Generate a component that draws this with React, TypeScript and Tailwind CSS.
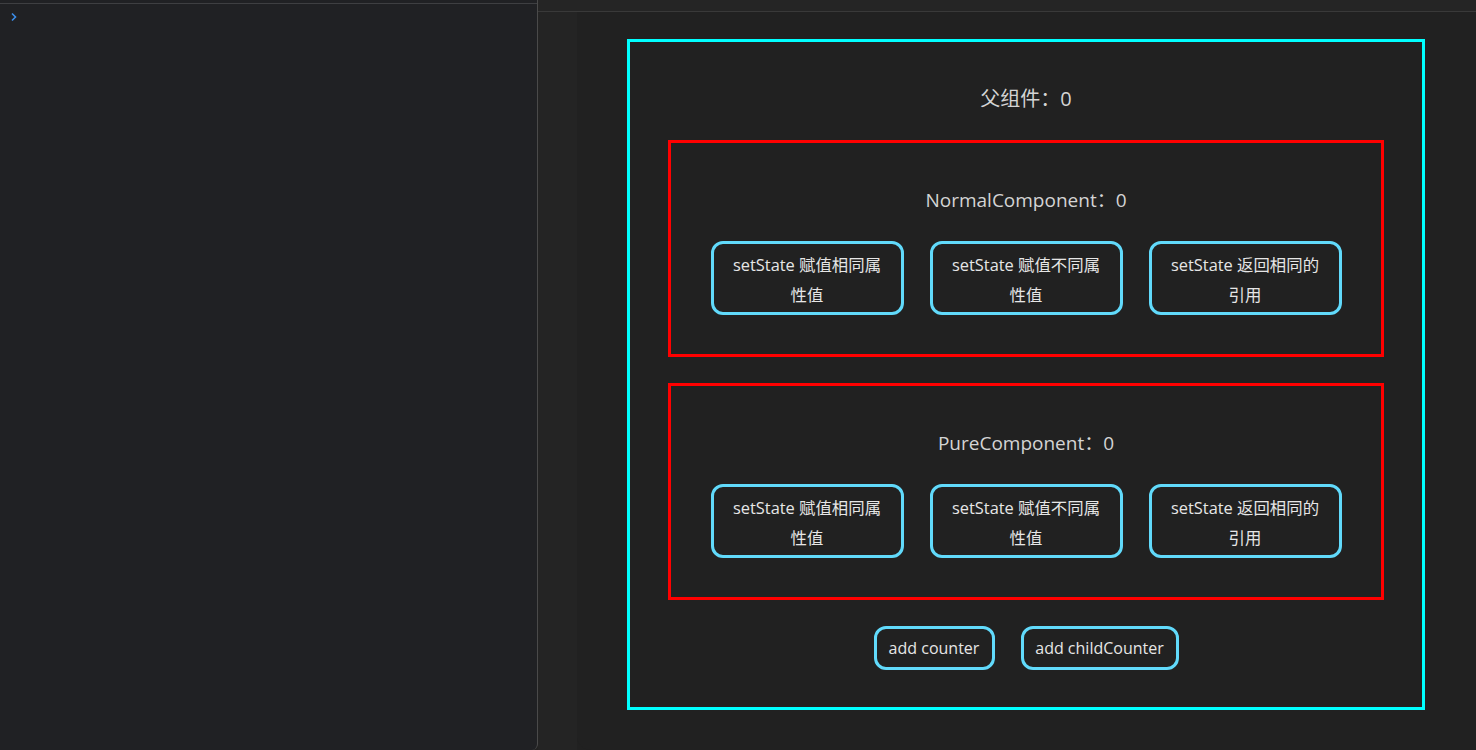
const font = { fontFamily: '"Open Sans", "Noto Sans CJK SC", sans-serif' };

function ActionButton({ children }: { children: React.ReactNode }) {
  return (
    <button className="w-[193px] h-[74px] px-[18px] pt-[4px] border-[3px] border-[#61dafb] rounded-[12px] text-[16.4px] leading-[30px] text-[#e6e6e6] bg-transparent">
      {children}
    </button>
  );
}

function ChildBox({ title }: { title: string }) {
  return (
    <div className="w-[716px] h-[217px] border-[3px] border-[#ff0000] flex flex-col items-center pt-[44px]">
      <div className="text-[19px] leading-[26px] text-[#d4d4d4]">{title}：0</div>
      <div className="flex gap-[26px] mt-[28px]">
        <ActionButton>setState 赋值相同属性值</ActionButton>
        <ActionButton>setState 赋值不同属性值</ActionButton>
        <ActionButton>setState 返回相同的引用</ActionButton>
      </div>
    </div>
  );
}

export default function App() {
  return (
    <div className="flex w-[1476px] h-[750px] bg-[#212121] overflow-hidden" style={font}>
      <aside className="w-[538px] h-full bg-[#202124] border-r border-[#4a4a4a] rounded-br-[6px]">
        <div className="mt-[3px] border-t border-[#3e3f42] pt-[8px] pl-[10px]">
          <svg width="8" height="10" viewBox="0 0 8 10" fill="none">
            <path d="M2 1.5 L5.5 5 L2 8.5" stroke="#3b8eea" strokeWidth="1.6" />
          </svg>
        </div>
      </aside>
      <div className="flex-1 flex flex-col">
        <div className="h-[12px] bg-[#252525] border-b border-[#393939]" />
        <div className="flex flex-1">
          <div className="w-[39px] bg-[#242424]" />
          <main className="flex-1 bg-[#212121] rounded-bl-[14px] pl-[50px] pt-[27px]">
            <div className="w-[798px] h-[671px] border-[3px] border-[#00ffff] flex flex-col items-center pt-[44px]">
              <div className="text-[20px] leading-[26px] text-[#d4d4d4]">父组件：0</div>
              <div className="mt-[28px] flex flex-col gap-[26px]">
                <ChildBox title="NormalComponent" />
                <ChildBox title="PureComponent" />
              </div>
              <div className="flex gap-[26px] mt-[26px]">
                <button className="h-[44px] w-[121px] border-[3px] border-[#61dafb] rounded-[12px] text-[16px] text-[#e6e6e6]">
                  add counter
                </button>
                <button className="h-[44px] w-[158px] border-[3px] border-[#61dafb] rounded-[12px] text-[16px] text-[#e6e6e6]">
                  add childCounter
                </button>
              </div>
            </div>
          </main>
        </div>
      </div>
    </div>
  );
}
